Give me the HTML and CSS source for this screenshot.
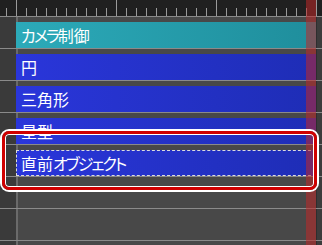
FILE: index.html
```html
<!DOCTYPE html>
<html lang="ja">
<head>
    <meta charset="UTF-8">
    <meta name="viewport" content="width=device-width, initial-scale=1.0">
    <title>タイムライン</title>
    <link rel="stylesheet" href="styles.css">
</head>
<body>
    <div class="timeline">
        <div class="ruler"></div>

        <div class="track">
            <div class="head"></div>
            <div class="lane"><div class="clip camera"><span class="kana">カメラ</span>制御</div></div>
            <div class="tail"></div>
        </div>
        <div class="track">
            <div class="head"></div>
            <div class="lane"><div class="clip">円</div></div>
            <div class="tail"></div>
        </div>
        <div class="track">
            <div class="head"></div>
            <div class="lane"><div class="clip">三角形</div></div>
            <div class="tail"></div>
        </div>
        <div class="track">
            <div class="head"></div>
            <div class="lane"><div class="clip">星型</div></div>
            <div class="tail"></div>
        </div>
        <div class="track">
            <div class="head"></div>
            <div class="lane"><div class="clip selected">直前<span class="kana">オブジェクト</span></div></div>
            <div class="tail"></div>
        </div>
        <div class="track">
            <div class="head"></div>
            <div class="lane"></div>
            <div class="tail"></div>
        </div>
        <div class="track">
            <div class="head"></div>
            <div class="lane"></div>
            <div class="tail"></div>
        </div>
        <div class="track">
            <div class="head"></div>
            <div class="lane"></div>
            <div class="tail"></div>
        </div>

        <!-- playhead and annotation lie over the tracks -->
        <div class="playhead"></div>
        <div class="highlight"></div>
    </div>
</body>
</html>
```

FILE: styles.css
```css
* {
    margin: 0;
    padding: 0;
    box-sizing: border-box;
}

body {
    font-family: "Noto Sans CJK JP", "Noto Sans", sans-serif;
    background-color: #484848;
    overflow: hidden;
}

.timeline {
    position: relative;
    width: 322px;
    height: 245px;
    overflow: hidden;
}

.ruler {
    height: 17px;
    border-bottom: 1px solid #8a8a8a;
    background:
        linear-gradient(to right, #9a9a9a 1px, transparent 1px) 16px 0 / 100px 16px repeat-x,
        linear-gradient(to right, #9a9a9a 1px, transparent 1px) 6px 8px / 10px 8px repeat-x,
        #202020;
}

.track {
    display: flex;
    height: 32px;
    border-bottom: 1px solid #8a8a8a;
}

.head {
    width: 16px;
    background-color: #3a3a3a;
}

.lane {
    flex: 1;
    padding-top: 5px;
    background: linear-gradient(to right, #6a6a6a 2px, #484848 2px);
}

.tail {
    width: 6px;
    border-left: 1px solid #2e2e2e;
    background-color: #3c3c3c;
}

.clip {
    height: 26px;
    line-height: 26px;
    padding-left: 5px;
    color: white;
    font-size: 16px;
    font-feature-settings: "palt";
    white-space: nowrap;
    background: linear-gradient(to right, #2a36da, #1e2db6);
}

.clip .kana {
    letter-spacing: -2px;
}

.clip.camera {
    background: linear-gradient(to right, #2caab9, #1f8e9c);
}

.clip.selected {
    padding-left: 4px;
    line-height: 24px;
    border: 1px dashed #dcdcdc;
}

.playhead {
    position: absolute;
    top: 0;
    left: 306px;
    width: 10px;
    height: 100%;
    background-color: rgba(192, 40, 40, 0.55);
}

.highlight {
    position: absolute;
    left: 2px;
    top: 131px;
    width: 315px;
    height: 59px;
    border: 3px solid #d00000;
    border-radius: 7px;
    box-shadow: 0 0 0 2px #fff, inset 0 0 0 1px #fff;
}
```
